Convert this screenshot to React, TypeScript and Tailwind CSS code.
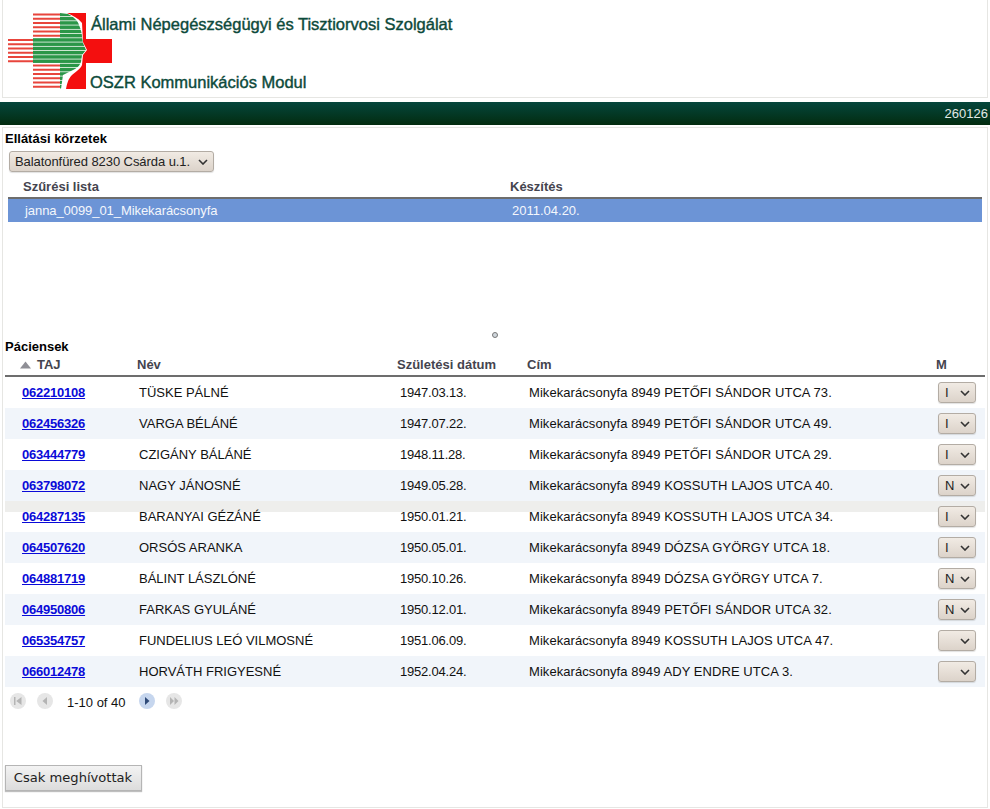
import React from "react";

const patients = [
  { taj: "062210108", name: "TÜSKE PÁLNÉ", born: "1947.03.13.", addr: "Mikekarácsonyfa 8949 PETŐFI SÁNDOR UTCA 73.", m: "I" },
  { taj: "062456326", name: "VARGA BÉLÁNÉ", born: "1947.07.22.", addr: "Mikekarácsonyfa 8949 PETŐFI SÁNDOR UTCA 49.", m: "I" },
  { taj: "063444779", name: "CZIGÁNY BÁLÁNÉ", born: "1948.11.28.", addr: "Mikekarácsonyfa 8949 PETŐFI SÁNDOR UTCA 29.", m: "I" },
  { taj: "063798072", name: "NAGY JÁNOSNÉ", born: "1949.05.28.", addr: "Mikekarácsonyfa 8949 KOSSUTH LAJOS UTCA 40.", m: "N" },
  { taj: "064287135", name: "BARANYAI GÉZÁNÉ", born: "1950.01.21.", addr: "Mikekarácsonyfa 8949 KOSSUTH LAJOS UTCA 34.", m: "I" },
  { taj: "064507620", name: "ORSÓS ARANKA", born: "1950.05.01.", addr: "Mikekarácsonyfa 8949 DÓZSA GYÖRGY UTCA 18.", m: "I" },
  { taj: "064881719", name: "BÁLINT LÁSZLÓNÉ", born: "1950.10.26.", addr: "Mikekarácsonyfa 8949 DÓZSA GYÖRGY UTCA 7.", m: "N" },
  { taj: "064950806", name: "FARKAS GYULÁNÉ", born: "1950.12.01.", addr: "Mikekarácsonyfa 8949 PETŐFI SÁNDOR UTCA 32.", m: "N" },
  { taj: "065354757", name: "FUNDELIUS LEÓ VILMOSNÉ", born: "1951.06.09.", addr: "Mikekarácsonyfa 8949 KOSSUTH LAJOS UTCA 47.", m: "" },
  { taj: "066012478", name: "HORVÁTH FRIGYESNÉ", born: "1952.04.24.", addr: "Mikekarácsonyfa 8949 ADY ENDRE UTCA 3.", m: "" },
];

const stripeYs = Array.from({ length: 18 }, (_, i) => 13.5 + i * 4.25);

function Logo() {
  const head =
    "M60 13 L68 14 C74 17 78 21 79 25 C81 30 82 34 82 37 L83 43 L86 50 L82 55 L81 62 C80 65 78 67 75 69 L63 75 L61 89 L60 89 Z";
  return (
    <svg width="106" height="78" viewBox="7 12 106 78" className="shrink-0">
      <defs>
        <clipPath id="head-clip">
          <path d={head} />
        </clipPath>
      </defs>
      {/* cross, cut by the outline of the face */}
      <path
        d="M67 13 H86 V39 H112 V63 H86 V89 H66 C67 84 68 79 72 75 C76 72 81 68 82 65 L83 55 L87 50 L83 42 L82 23 C78 18 72 15 67 13 Z"
        fill="#f40f0f"
      />
      {/* stripes */}
      {stripeYs.map((y) => {
        const inArm = y > 38 && y < 63;
        return (
          <g key={y}>
            {inArm && <rect x="8" y={y} width="25" height="2" fill="#e8453c" />}
            <rect
              x="33"
              y={inArm ? y - 0.8 : y}
              width="27"
              height={inArm ? 3.5 : 2}
              fill={inArm ? "#2a9648" : "#e8453c"}
            />
            <rect x="60" y={y - 0.8} width="30" height="3.5" fill="#2a9648" clipPath="url(#head-clip)" />
          </g>
        );
      })}
    </svg>
  );
}

function Chevron() {
  return (
    <svg width="10" height="6" viewBox="0 0 10 6" fill="none" stroke="#333" strokeWidth="1.6" className="pointer-events-none absolute right-[6px] top-1/2 -translate-y-1/2">
      <path d="M1 1 L5 5 L9 1" />
    </svg>
  );
}

function Dropdown({ value, className, wide }: { value: string; className: string; wide?: boolean }) {
  return (
    <div className={`relative ${className}`}>
      <select
        defaultValue={value}
        className={`h-full w-full appearance-none rounded-[3px] border border-[#b3aca4] bg-gradient-to-b from-[#f1ebe4] to-[#dcd3ca] text-[13px] tracking-[-0.07px] text-[#222] shadow-[0_1px_1px_rgba(0,0,0,0.12)] ${wide ? "pl-[5px]" : "pl-[6px]"}`}
      >
        <option value={value}>{value}</option>
      </select>
      <Chevron />
    </div>
  );
}

function PagerIcon({ kind, active }: { kind: "first" | "prev" | "next" | "last"; active?: boolean }) {
  const fill = active ? "#2e4a78" : "#b4b4b4";
  return (
    <span className={`flex h-[16px] w-[16px] items-center justify-center rounded-full ${active ? "bg-[#c6d6ee]" : "bg-[#e6e6e6]"}`}>
      <svg width="10" height="8" viewBox="0 0 10 8" fill={fill}>
        {kind === "first" && <path d="M1 0h1.5v8H1zM8.5 0v8L3.2 4z" />}
        {kind === "prev" && <path d="M7 0v8L2.5 4z" />}
        {kind === "next" && <path d="M3 0v8L7.5 4z" />}
        {kind === "last" && <path d="M1 0v8L5 4zM5.5 0v8L9.5 4z" />}
      </svg>
    </span>
  );
}

const rowGrid = "grid grid-cols-[134px_261px_129px_409px_1fr]";

export default function App() {
  return (
    <div className="flex h-[809px] w-[990px] flex-col overflow-hidden bg-white font-['Liberation_Sans',Arial,sans-serif] text-[13px] text-[#111]">
      {/* Header */}
      <header className="mx-[2px] flex h-[98px] shrink-0 border border-t-0 border-[#e6e6e3] pl-[4px] pt-[12px]">
        <Logo />
        <div className="flex h-[80px] flex-col justify-between text-[16.5px] leading-5 text-[#0d4a3b] [-webkit-text-stroke:0.4px_#0d4a3b]">
          <div className="-ml-[22px] mt-[2px]">Állami Népegészségügyi és Tisztiorvosi Szolgálat</div>
          <div className="-ml-[23px]">OSZR Kommunikációs Modul</div>
        </div>
      </header>

      {/* Green bar */}
      <div className="mt-[4px] flex h-[23px] shrink-0 items-center justify-end bg-gradient-to-b from-[#05463c] to-[#032c0f] pr-[2px] text-[13px] text-[#e2eae6]">
        260126
      </div>

      <main className="mx-[2px] mb-[1px] mt-[2px] flex flex-1 flex-col border border-[#e6e6e3] pl-[2px] pr-[2px]">
        <h2 className="mt-[3px] text-[13px] font-bold leading-[15px] text-black">Ellátási körzetek</h2>
        <Dropdown value="Balatonfüred 8230 Csárda u.1." wide className="ml-[4px] mt-[5px] h-[21px] w-[205px]" />

        {/* Filter list */}
        <div className="mx-[3px] mt-[8px] grid h-[19px] grid-cols-[502px_1fr] border-b-2 border-[#6d6d6d] font-bold leading-[14px] text-[#44444e]">
          <span className="pl-[15px]">Szűrési lista</span>
          <span>Készítés</span>
        </div>
        <div className="mx-[3px] grid h-[23px] grid-cols-[504px_1fr] items-center bg-[#6c94d6] text-[#f4f7fc]">
          <span className="pl-[17px] tracking-[-0.07px]">janna_0099_01_Mikekarácsonyfa</span>
          <span>2011.04.20.</span>
        </div>

        {/* Splitter */}
        <div className="flex h-[115px] items-end justify-center">
          <span className="mb-[-1px] -ml-[1px] h-[6px] w-[6px] rounded-full border border-[#777] bg-[#cfd6dc]" />
        </div>

        {/* Patients */}
        <h2 className="mt-[2px] text-[13px] font-bold leading-[15px] text-black">Páciensek</h2>
        <div className={`${rowGrid} mt-[3px] box-content h-[18px] items-start border-b-2 border-[#6d6d6d] font-bold leading-[15px] text-[#44444e]`}>
          <span className="flex items-center pl-[15px]">
            <svg width="11" height="8" viewBox="0 0 11 8" fill="#8f8f96" className="mr-[6px]">
              <path d="M5.5 0.5 L11 7.5 H0 Z" />
            </svg>
            TAJ
          </span>
          <span className="-ml-[2px]">Név</span>
          <span className="-ml-[3px]">Születési dátum</span>
          <span className="-ml-[2px]">Cím</span>
          <span className="-ml-[2px]">M</span>
        </div>
        <div>
          {patients.map((p, i) => (
            <div key={p.taj} className={`${rowGrid} relative h-[31px] items-center ${i % 2 === 1 ? "bg-[#f1f5fa]" : "bg-white"}`}>
              {i === 4 && <div className="absolute inset-x-0 top-0 h-[11px] bg-[#eeeeec]" />}
              <a href="#" className="relative pl-[17px] font-bold tracking-[-0.22px] text-[#0a0ad8] underline">
                {p.taj}
              </a>
              <span className="relative">{p.name}</span>
              <span className="relative tracking-[-0.2px]">{p.born}</span>
              <span className="relative tracking-[0.07px]">{p.addr}</span>
              <Dropdown value={p.m} className="h-[21px] w-[38px]" />
            </div>
          ))}
        </div>

        {/* Pager */}
        <div className="mt-[4px] flex items-center pl-[5px] text-[13px]">
          <PagerIcon kind="first" />
          <span className="ml-[11px]"><PagerIcon kind="prev" /></span>
          <span className="ml-[14px] w-[72px] translate-y-[2px] whitespace-nowrap">1-10 of 40</span>
          <PagerIcon kind="next" active />
          <span className="ml-[11px]"><PagerIcon kind="last" /></span>
        </div>

        <button className="mt-[54px] h-[26px] w-[137px] border border-[#b5b5b5] bg-gradient-to-b from-[#f3f3f3] to-[#dcdcdc] pr-[1px] font-['DejaVu_Sans',sans-serif] text-[13.1px] text-[#222] shadow-[0_1px_1px_rgba(0,0,0,0.25)]">
          Csak meghívottak
        </button>
      </main>
    </div>
  );
}
